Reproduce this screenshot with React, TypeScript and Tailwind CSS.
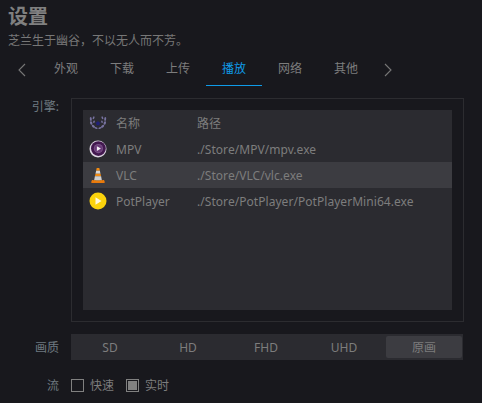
const font = "font-['Noto_Sans','Noto_Sans_CJK_SC',sans-serif]";

const tabs = ['外观', '下载', '上传', '播放', '网络', '其他'];
const quality = ['SD', 'HD', 'FHD', 'UHD', '原画'];

function Laurel() {
  return (
    <svg width="18" height="16" viewBox="0 0 18 16">
      <g fill="#77729f">
        <ellipse cx="1.800" cy="4" rx="1" ry="2" transform="rotate(-5 1.800 4)" />
        <ellipse cx="4.600" cy="2.800" rx="0.800" ry="1.500" transform="rotate(25 4.600 2.800)" />
        <ellipse cx="2.200" cy="8" rx="1.100" ry="1.900" transform="rotate(-20 2.200 8)" />
        <ellipse cx="5" cy="6.800" rx="0.800" ry="1.300" transform="rotate(15 5 6.800)" />
        <ellipse cx="4.400" cy="11.300" rx="1.100" ry="1.900" transform="rotate(-50 4.400 11.300)" />
        <ellipse cx="7" cy="13" rx="1.600" ry="0.800" transform="rotate(15 7 13)" />
        <ellipse cx="16.200" cy="4" rx="1" ry="2" transform="rotate(5 16.200 4)" />
        <ellipse cx="13.400" cy="2.800" rx="0.800" ry="1.500" transform="rotate(-25 13.400 2.800)" />
        <ellipse cx="15.800" cy="8" rx="1.100" ry="1.900" transform="rotate(20 15.800 8)" />
        <ellipse cx="13" cy="6.800" rx="0.800" ry="1.300" transform="rotate(-15 13 6.800)" />
        <ellipse cx="13.600" cy="11.300" rx="1.100" ry="1.900" transform="rotate(50 13.600 11.300)" />
        <ellipse cx="11" cy="13" rx="1.600" ry="0.800" transform="rotate(-15 11 13)" />
      </g>
      <path d="M9 5.500l.9 1.800 1.900.3-1.400 1.300.3 1.900L9 9.900l-1.700.9.300-1.900-1.400-1.300 1.900-.3z" fill="#20207a" />
    </svg>
  );
}

function MpvIcon() {
  return (
    <svg width="18" height="18" viewBox="0 0 18 18">
      <circle cx="9" cy="9" r="8.500" fill="#ddd6e2" />
      <circle cx="9.400" cy="8.600" r="7.400" fill="#43184f" />
      <circle cx="9.400" cy="8.600" r="4.600" fill="#7a5488" />
      <circle cx="9.400" cy="8.600" r="3.700" fill="#6a3a78" />
      <path d="M7.900 6.300l4 2.300-4 2.300z" fill="#f4f0f6" />
    </svg>
  );
}

function VlcIcon() {
  return (
    <svg width="14" height="15" viewBox="0 0 14 15">
      <path d="M1 12h2l-.4 1h8.800l-.4-1h2l.8 2.100q.2.800-.8.900H1q-1-.100-.8-.900z" fill="#e8790c" />
      <path d="M5.700 0h2.600l.6 2.700H5.100z" fill="#f08a12" />
      <path d="M5.100 2.700h3.800l.6 3H4.500z" fill="#d6d6d6" />
      <path d="M4.500 5.700h5l.6 2.600H3.900z" fill="#f08a12" />
      <path d="M3.900 8.300h6.200l.7 3.700q-3.800 1.200-7.600 0z" fill="#cfcfcf" />
      <path d="M3.200 12q3.800 1.200 7.600 0l.5 1.300H2.700z" fill="#f08a12" />
    </svg>
  );
}

function PotIcon() {
  return (
    <svg width="18" height="18" viewBox="0 0 18 18">
      <circle cx="9" cy="9" r="8.500" fill="#fbd30c" />
      <path d="M6.500 5.200l6 3.800-6 3.800z" fill="#fff8d8" />
    </svg>
  );
}

const engines = [
  { name: 'MPV', path: './Store/MPV/mpv.exe', icon: <MpvIcon /> },
  { name: 'VLC', path: './Store/VLC/vlc.exe', icon: <VlcIcon />, active: true },
  { name: 'PotPlayer', path: './Store/PotPlayer/PotPlayerMini64.exe', icon: <PotIcon /> },
];

function Row({ icon, name, path, active }: { icon: React.ReactNode; name: string; path: string; active?: boolean }) {
  return (
    <div className={`flex items-center h-[26px] ${active ? 'bg-[#3c3c41]' : ''}`}>
      <div className="w-[33px] flex justify-center items-center pr-[3px]">{icon}</div>
      <div className="w-[81px] pt-[2px]">{name}</div>
      <div className="pt-[2px] tracking-[0.05px]">{path}</div>
    </div>
  );
}

export default function App() {
  return (
    <div className={`${font} w-[482px] h-[403px] overflow-hidden bg-[#18181d] text-[#7d7d7d] text-xs leading-none`}>
      <div className="pl-2 pt-[7px] text-xl leading-[20px] font-bold text-[#808080]">设置</div>
      <div className="pl-2 mt-[7px] leading-[14px] text-[#777777]">芝兰生于幽谷，不以无人而不芳。</div>

      <div className="flex items-center h-[33px] mt-[5px] pl-[18px]">
        <svg width="8" height="14" viewBox="0 0 8 14" fill="none" stroke="#777777" strokeWidth="1.100" className="mr-[12px]">
          <path d="M7 1L1 7l6 6" />
        </svg>
        {tabs.map((t) => (
          <div
            key={t}
            className={`w-[56px] h-[33px] flex items-center justify-center border-b ${
              t === '播放' ? 'border-[#0f9be8] text-[#0f9be8]' : 'border-transparent'
            }`}
          >
            {t}
          </div>
        ))}
        <svg width="8" height="14" viewBox="0 0 8 14" fill="none" stroke="#777777" strokeWidth="1.100" className="ml-[10px]">
          <path d="M1 1l6 6-6 6" />
        </svg>
      </div>

      <div className="flex mt-[12px]">
        <div className="w-[59px] text-right pt-[3px] mr-3 text-[#6f7a80]">引擎:</div>
        <div className="w-[393px] h-[224px] border border-[#2c2c30] p-[11px]">
          <div className="h-[200px] w-[369px] bg-[#2b2b30]">
            <Row icon={<Laurel />} name="名称" path="路径" />
            {engines.map((e) => (
              <Row key={e.name} icon={e.icon} name={e.name} path={e.path} active={e.active} />
            ))}
          </div>
        </div>
      </div>

      <div className="flex items-center mt-[12px]">
        <div className="w-[59px] text-right pt-[2px] mr-3 text-[#6f7a80]">画质</div>
        <div className="w-[392px] h-[26px] bg-[#2b2b30] flex items-center">
          {quality.map((q) => (
            <div
              key={q}
              className={`h-[22px] pt-[2px] rounded-[2px] flex items-center justify-center ${
                q === '原画' ? 'bg-[#3c3c41] w-[76px] ml-[3px]' : 'w-[78px]'
              }`}
            >
              {q}
            </div>
          ))}
        </div>
      </div>

      <div className="flex items-center mt-[19px]">
        <div className="w-[59px] text-right mr-3 text-[#6f7a80]">流</div>
        <div className="w-[13px] h-[13px] border border-[#808080] mr-[6px]" />
        <div className="mr-[12px]">快速</div>
        <div className="w-[13px] h-[13px] border border-[#808080] p-[1px] mr-[6px]">
          <div className="w-full h-full bg-[#808080]" />
        </div>
        <div>实时</div>
      </div>
    </div>
  );
}
